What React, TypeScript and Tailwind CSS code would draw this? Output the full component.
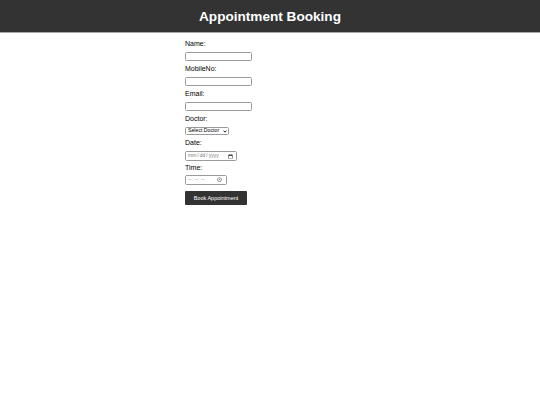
import React from "react";

export default function App() {
  const font = { fontFamily: '"Liberation Sans", Arial, sans-serif' };
  return (
    <div className="min-h-[405px] bg-white font-['Liberation_Sans',Arial,sans-serif]">
      <header className="h-[33px] bg-[#333333] border-b border-[#a8a8a8] flex items-center justify-center">
        <h1 className="text-white font-bold text-[13.6px] leading-none mt-[1px]">Appointment Booking</h1>
      </header>
      <form className="ml-[185px] pt-[6px] flex flex-col items-start" style={font}>
        <label className="text-[7px] leading-[9px] h-[9px] text-black">Name:</label>
        <input type="text" className="mt-[4px] mb-[3px] w-[67px] h-[9px] border border-[#9a9a9a] rounded-[1.5px] text-[5px] px-[1px]" />
        <label className="text-[7px] leading-[9px] h-[9px] text-black">MobileNo:</label>
        <input type="text" className="mt-[4px] mb-[3px] w-[67px] h-[9px] border border-[#9a9a9a] rounded-[1.5px] text-[5px] px-[1px]" />
        <label className="text-[7px] leading-[9px] h-[9px] text-black">Email:</label>
        <input type="email" className="mt-[4px] mb-[3px] w-[67px] h-[9px] border border-[#9a9a9a] rounded-[1.5px] text-[5px] px-[1px]" />
        <label className="text-[7px] leading-[9px] h-[9px] text-black">Doctor:</label>
        <div className="relative mt-[4px] mb-[3px] w-[44px] h-[8px] leading-none">
          <select className="block appearance-none w-full h-[8px] min-h-0 border border-[#9a9a9a] rounded-[1.5px] text-[5.2px] leading-none pl-[2px] pr-[6px] py-0 bg-white text-black">
            <option>Select Doctor</option>
          </select>
          <svg className="absolute right-[2px] top-[2.5px] pointer-events-none" width="4" height="3" viewBox="0 0 8 6">
            <path d="M1 1.2 L4 4.4 L7 1.2" fill="none" stroke="#000" strokeWidth="1.8" />
          </svg>
        </div>
        <label className="text-[7px] leading-[9px] h-[9px] text-black">Date:</label>
        <input type="date" className="mt-[4px] mb-[2px] w-[52px] h-[10px] border border-[#9a9a9a] rounded-[1.5px] text-[5px] px-[1px] text-[#777]" />
        <label className="text-[7px] leading-[9px] h-[9px] text-black">Time:</label>
        <input type="time" className="mt-[3px] w-[42px] h-[10px] border border-[#9a9a9a] rounded-[1.5px] text-[5px] px-[1px] text-[#777]" />
        <button type="button" className="mt-[6px] w-[62px] h-[14px] bg-[#333333] text-white text-[5.5px] rounded-[1px]">Book Appointment</button>
      </form>
    </div>
  );
}
